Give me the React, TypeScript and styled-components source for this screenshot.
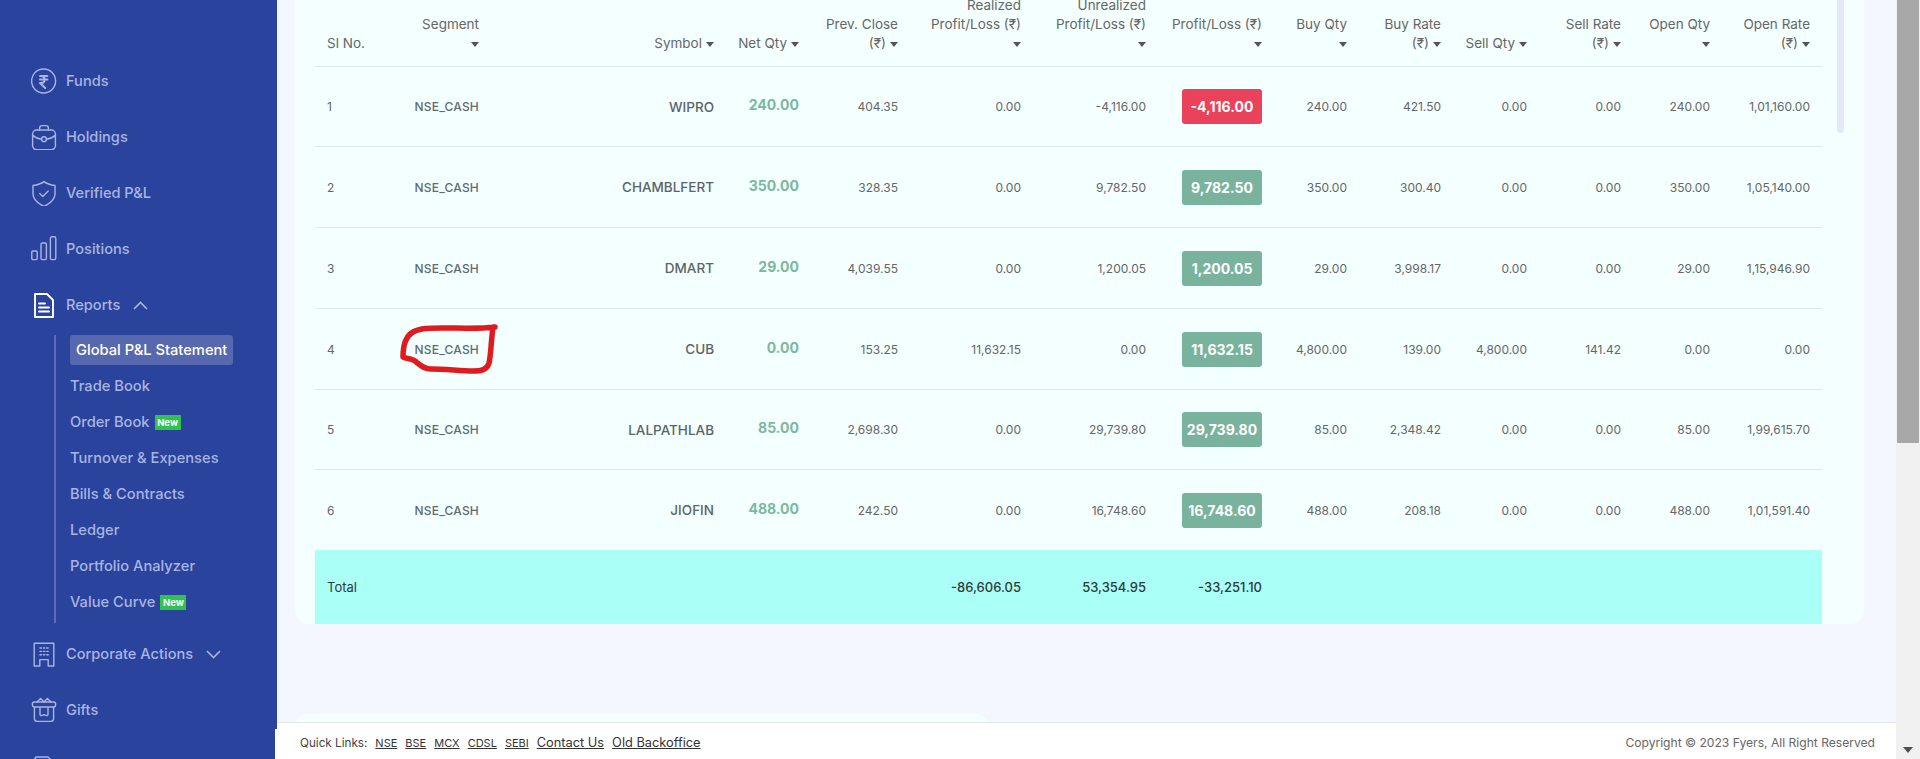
import React from "react";
import styled, { createGlobalStyle } from "styled-components";

const FONT = `Inter, "Open Sans", "Liberation Sans", sans-serif`;

const Global = createGlobalStyle`
  html, body { margin: 0; padding: 0; height: 100%; overflow: hidden; }
  body { font-family: ${FONT}; background: #f4f7ff; }
  * { box-sizing: border-box; }
`;

const Page = styled.div`
  display: flex;
  height: 759px;
  overflow: hidden;
`;

const Sidebar = styled.nav`
  width: 277px;
  flex: none;
  background: #2a439c;
  padding-top: 53px;
  overflow: hidden;
`;

const NavItem = styled.div`
  display: flex;
  align-items: center;
  height: 56px;
  padding-left: 31px;
  gap: 9px;
  color: #a9b5e3;
  font-size: 14.6px;
  font-weight: 500;
`;

const NavIcon = styled.svg`
  width: 26px;
  height: 26px;
  flex: none;
  fill: none;
  stroke: currentColor;
  stroke-width: 1.4;
  stroke-linecap: round;
  stroke-linejoin: round;
`;

const ActiveIcon = styled(NavIcon)`
  stroke: #fff;
  stroke-width: 1.9;
`;

const Chevron = styled.svg`
  width: 15px;
  height: 9px;
  margin-left: 4px;
  fill: none;
  stroke: currentColor;
  stroke-width: 1.6;
`;

const SubList = styled.div`
  margin: 2px 0 3px 54px;
  padding: 0 0 6px 14px;
  border-left: 2px solid #5d6db5;
  display: flex;
  flex-direction: column;
  align-items: flex-start;
  gap: 6px;
`;

const SubItem = styled.div<{ $active?: boolean }>`
  display: flex;
  align-items: center;
  gap: 5px;
  height: 30px;
  border-radius: 3px;
  padding: ${(p) => (p.$active ? "0 6px" : "0")};
  background: ${(p) => (p.$active ? "#5868ae" : "transparent")};
  color: ${(p) => (p.$active ? "#fff" : "#a9b5e3")};
  font-size: 14.7px;
  font-weight: 500;
`;

const NewBadge = styled.span`
  display: inline-flex;
  align-items: center;
  justify-content: center;
  width: 26px;
  height: 15px;
  background: #2fc24f;
  color: #fff;
  font-size: 9.5px;
  font-weight: 700;
`;

const Main = styled.div`
  flex: 1;
  min-width: 0;
  display: flex;
  flex-direction: column;
`;

const Content = styled.div`
  flex: 1;
  min-height: 0;
  overflow: hidden;
  padding: 0 32px 0 18px;
`;

const Card = styled.section`
  position: relative;
  background: #f4ffff;
  padding: 0 42px 0 20px;
  border-radius: 0 0 14px 14px;
  overflow: hidden;
`;

const InnerThumb = styled.div`
  position: absolute;
  top: 0;
  right: 20px;
  width: 7px;
  height: 133px;
  background: #e3e9fb;
  border-radius: 0 0 4px 4px;
`;

const Table = styled.table`
  margin-top: -25px;
  width: 1507px;
  table-layout: fixed;
  border-collapse: separate;
  border-spacing: 0;
`;

const Th = styled.th<{ $left?: boolean }>`
  height: 92px;
  padding: 0 12px 13px;
  vertical-align: bottom;
  text-align: ${(p) => (p.$left ? "left" : "right")};
  font-size: 13.5px;
  font-weight: 400;
  line-height: 19px;
  color: #666;
  white-space: pre-line;
  border-bottom: 1px solid #dfe7ea;
`;

const SortCaret = styled.span`
  display: inline-block;
  width: 0;
  height: 0;
  margin-left: 4px;
  vertical-align: middle;
  border-left: 4.5px solid transparent;
  border-right: 4.5px solid transparent;
  border-top: 5px solid #555;
`;

const Td = styled.td<{ $left?: boolean; $noLine?: boolean; $h: number }>`
  position: relative;
  height: ${(p) => p.$h}px;
  padding: 0 12px;
  text-align: ${(p) => (p.$left ? "left" : "right")};
  font-size: 12px;
  color: #666;
  border-bottom: ${(p) => (p.$noLine ? "none" : "1px solid #dfe7ea")};
`;

const SegmentText = styled.span`
  font-size: 12px;
  font-weight: 500;
  letter-spacing: 0.2px;
  color: #5f6b70;
`;

const SymbolText = styled.span`
  font-size: 13.5px;
  font-weight: 500;
  color: #5b6468;
`;

const QtyText = styled.span`
  display: block;
  margin-top: -4px;
  font-size: 14px;
  font-weight: 700;
  color: #7ab89f;
`;

const PnlBadge = styled.span<{ $loss?: boolean }>`
  display: inline-flex;
  align-items: center;
  justify-content: center;
  width: 80px;
  height: 35px;
  border-radius: 3px;
  font-size: 14px;
  font-weight: 700;
  color: #fff;
  background: ${(p) => (p.$loss ? "#e9425a" : "#7ab39d")};
`;

const TotalCell = styled.td<{ $left?: boolean }>`
  height: 74px;
  padding: 0 12px;
  background: #aafff6;
  text-align: ${(p) => (p.$left ? "left" : "right")};
  font-size: 13px;
  font-weight: ${(p) => (p.$left ? 400 : 500)};
  color: #2f3a3a;
`;

const Scribble = styled.svg`
  position: absolute;
  left: 0;
  top: 15px;
  width: 98px;
  height: 50px;
  fill: none;
  stroke: #e01b1f;
  stroke-width: 5.5;
  stroke-linejoin: round;
  stroke-linecap: round;
`;

const PeekCard = styled.div`
  width: 695px;
  height: 40px;
  margin-top: 90px;
  background: #f4ffff;
  border-radius: 14px 14px 0 0;
`;

const Footer = styled.footer`
  position: relative;
  flex: none;
  height: 37px;
  background: #fff;
  border-top: 1px solid #e2e6ea;
  display: flex;
  align-items: center;
  justify-content: space-between;
  padding: 2px 21px 0 23px;
  font-size: 11.7px;
  color: #444;
  &::before {
    content: "";
    position: absolute;
    left: -2px;
    top: 6px;
    bottom: 0;
    width: 2px;
    background: #fff;
  }
`;

const QuickLinks = styled.div`
  display: flex;
  align-items: baseline;
  gap: 8px;
`;

const FootLink = styled.a<{ $abbr?: boolean }>`
  color: #333;
  font-size: ${(p) => (p.$abbr ? "11px" : "12.8px")};
  text-decoration: underline;
`;

const Copy = styled.span`
  font-size: 12.1px;
  color: #666;
`;

const ScrollTrack = styled.div`
  width: 24px;
  flex: none;
  background: #f1f1f1;
  display: flex;
  flex-direction: column;
  justify-content: space-between;
`;

const ScrollThumb = styled.div`
  width: 22px;
  height: 443px;
  margin-left: 1px;
  background: #a8a8a8;
`;

const ScrollArrow = styled.div`
  align-self: center;
  margin-bottom: 6px;
  width: 0;
  height: 0;
  border-left: 5px solid transparent;
  border-right: 5px solid transparent;
  border-top: 6px solid #505050;
`;

const icons: Record<string, React.ReactNode> = {
  funds: (
    <>
      <circle cx="12.6" cy="13" r="12" />
      <path strokeWidth="2" d="M9 8h7.4M9 11.6h7.4M10 8c4.8 0 4.8 7 0 7H9l5.2 5" />
    </>
  ),
  holdings: (
    <>
      <path d="M8.6 6V4.2c0-1.5 1-2.6 2.4-2.6h4c1.4 0 2.4 1.1 2.4 2.6V6" />
      <rect x="1.6" y="6" width="22.8" height="19.6" rx="4" />
      <path d="M1.6 11.4c3 2.6 6 3.6 9 3.8M24.4 11.4c-3 2.6-6 3.6-9 3.8" />
      <circle cx="13" cy="15.2" r="2.4" />
    </>
  ),
  verified: (
    <>
      <path d="M13 1.6C16 4 20 5 24 5.5V14c0 6-6 10-11 12.5C8 24 2 20 2 14V5.5C6 5 10 4 13 1.6z" />
      <path d="m8.8 13.6 3 3 5.4-5.6" />
    </>
  ),
  positions: (
    <>
      <rect x=".8" y="15" width="5.4" height="8.6" rx="1" />
      <rect x="10" y="7" width="5.4" height="16.6" rx="1.4" />
      <rect x="19.4" y=".8" width="5.4" height="22.8" rx="1.6" />
    </>
  ),
  corporate: (
    <>
      <path d="M3.2 25V2.2h19.6V25h-5.6v-6.4H8.8V25z" />
      <path d="M9 7h1.4M12.4 7h1.4M15.8 7h1.4M9 10.4h1.4M12.4 10.4h1.4M15.8 10.4h1.4M9 13.8h1.4M12.4 13.8h1.4M15.8 13.8h1.4" />
    </>
  ),
  gifts: (
    <>
      <rect x="1.4" y="5" width="23.2" height="5" rx="2" />
      <path d="M3.4 10v11.4c0 1.8 1.2 3 3 3h13.2c1.8 0 3-1.2 3-3V10" />
      <path d="M6 5l3.6-3.6L13 5l3.4-3.6L20 5" />
      <path d="M9 11v6.6c0 .8.6 1.2 1.4 1L13 17.6l2.6 1c.8.2 1.4-.2 1.4-1V11" />
    </>
  ),
  last: <path d="M4 27V6a2 2 0 0 1 2-2h11l5 5v18z" />,
};

const Icon = ({ name }: { name: string }) => <NavIcon viewBox="0 0 26 26">{icons[name]}</NavIcon>;

const headers: { label: string; caret?: boolean; left?: boolean; w: number }[] = [
  { label: "Sl No.", left: true, w: 85 },
  { label: "Segment\n", caret: true, w: 91 },
  { label: "Symbol", caret: true, w: 235 },
  { label: "Net Qty", caret: true, w: 85 },
  { label: "Prev. Close\n(₹)", caret: true, w: 99 },
  { label: "Realized\nProfit/Loss (₹)\n", caret: true, w: 123 },
  { label: "Unrealized\nProfit/Loss (₹)\n", caret: true, w: 125 },
  { label: "Profit/Loss (₹)\n", caret: true, w: 116 },
  { label: "Buy Qty\n", caret: true, w: 85 },
  { label: "Buy Rate\n(₹)", caret: true, w: 94 },
  { label: "Sell Qty", caret: true, w: 86 },
  { label: "Sell Rate\n(₹)", caret: true, w: 94 },
  { label: "Open Qty\n", caret: true, w: 89 },
  { label: "Open Rate\n(₹)", caret: true, w: 100 },
];

const rowHeights = [80, 81, 81, 81, 80, 80];

const rows = [
  ["WIPRO", "240.00", "404.35", "0.00", "-4,116.00", "-4,116.00", "240.00", "421.50", "0.00", "0.00", "240.00", "1,01,160.00"],
  ["CHAMBLFERT", "350.00", "328.35", "0.00", "9,782.50", "9,782.50", "350.00", "300.40", "0.00", "0.00", "350.00", "1,05,140.00"],
  ["DMART", "29.00", "4,039.55", "0.00", "1,200.05", "1,200.05", "29.00", "3,998.17", "0.00", "0.00", "29.00", "1,15,946.90"],
  ["CUB", "0.00", "153.25", "11,632.15", "0.00", "11,632.15", "4,800.00", "139.00", "4,800.00", "141.42", "0.00", "0.00"],
  ["LALPATHLAB", "85.00", "2,698.30", "0.00", "29,739.80", "29,739.80", "85.00", "2,348.42", "0.00", "0.00", "85.00", "1,99,615.70"],
  ["JIOFIN", "488.00", "242.50", "0.00", "16,748.60", "16,748.60", "488.00", "208.18", "0.00", "0.00", "488.00", "1,01,591.40"],
];

export default function App() {
  return (
    <>
      <Global />
      <Page>
        <Sidebar>
          <NavItem><Icon name="funds" />Funds</NavItem>
          <NavItem><Icon name="holdings" />Holdings</NavItem>
          <NavItem><Icon name="verified" />Verified P&amp;L</NavItem>
          <NavItem><Icon name="positions" />Positions</NavItem>
          <NavItem>
            <ActiveIcon viewBox="0 0 26 26">
              <path d="M4 25V2h12l6 6v17z" />
              <path d="M8 11.5h6M8 15.5h10M8 19.5h10" />
            </ActiveIcon>
            Reports
            <Chevron viewBox="0 0 15 9"><path d="M1 8l6.5-6.5L14 8" /></Chevron>
          </NavItem>
          <SubList>
            <SubItem $active>Global P&amp;L Statement</SubItem>
            <SubItem>Trade Book</SubItem>
            <SubItem>Order Book<NewBadge>New</NewBadge></SubItem>
            <SubItem>Turnover &amp; Expenses</SubItem>
            <SubItem>Bills &amp; Contracts</SubItem>
            <SubItem>Ledger</SubItem>
            <SubItem>Portfolio Analyzer</SubItem>
            <SubItem>Value Curve<NewBadge>New</NewBadge></SubItem>
          </SubList>
          <NavItem>
            <Icon name="corporate" />Corporate Actions
            <Chevron viewBox="0 0 15 9"><path d="M1 1l6.5 6.5L14 1" /></Chevron>
          </NavItem>
          <NavItem><Icon name="gifts" />Gifts</NavItem>
          <NavItem><Icon name="last" /></NavItem>
        </Sidebar>
        <Main>
          <Content>
            <Card>
              <InnerThumb />
              <Table>
                <colgroup>
                  {headers.map((h) => <col key={h.label} style={{ width: h.w }} />)}
                </colgroup>
                <thead>
                  <tr>
                    {headers.map((h) => (
                      <Th key={h.label} $left={h.left}>{h.label}{h.caret && <SortCaret />}</Th>
                    ))}
                  </tr>
                </thead>
                <tbody>
                  {rows.map((r, i) => {
                    const last = i === rows.length - 1;
                    const h = rowHeights[i];
                    return (
                      <tr key={r[0]}>
                        <Td $h={h} $left $noLine={last}>{i + 1}</Td>
                        <Td $h={h} $noLine={last}>
                          <SegmentText>NSE_CASH</SegmentText>
                          {r[0] === "CUB" && (
                            <Scribble viewBox="0 0 98 50">
                              <path d="M95 3C80 5 60 4 42 4 30 4 20 4 13 8 6 12 3 20 3 33c4 2 8 1 12 4 5 4 9 8 16 8 14 0 30 2 42 2 8 0 14-1 16-8 2-8 2-22 4-36z" />
                            </Scribble>
                          )}
                        </Td>
                        <Td $h={h} $noLine={last}><SymbolText>{r[0]}</SymbolText></Td>
                        <Td $h={h} $noLine={last}><QtyText>{r[1]}</QtyText></Td>
                        <Td $h={h} $noLine={last}>{r[2]}</Td>
                        <Td $h={h} $noLine={last}>{r[3]}</Td>
                        <Td $h={h} $noLine={last}>{r[4]}</Td>
                        <Td $h={h} $noLine={last}><PnlBadge $loss={r[5].startsWith("-")}>{r[5]}</PnlBadge></Td>
                        {r.slice(6).map((v, k) => <Td key={k} $h={h} $noLine={last}>{v}</Td>)}
                      </tr>
                    );
                  })}
                  <tr>
                    <TotalCell $left>Total</TotalCell>
                    <TotalCell colSpan={4} />
                    <TotalCell>-86,606.05</TotalCell>
                    <TotalCell>53,354.95</TotalCell>
                    <TotalCell>-33,251.10</TotalCell>
                    <TotalCell colSpan={6} />
                  </tr>
                </tbody>
              </Table>
            </Card>
            <PeekCard />
          </Content>
          <Footer>
            <QuickLinks>
              <span>Quick Links:</span>
              <FootLink $abbr>NSE</FootLink>
              <FootLink $abbr>BSE</FootLink>
              <FootLink $abbr>MCX</FootLink>
              <FootLink $abbr>CDSL</FootLink>
              <FootLink $abbr>SEBI</FootLink>
              <FootLink>Contact Us</FootLink>
              <FootLink>Old Backoffice</FootLink>
            </QuickLinks>
            <Copy>Copyright © 2023 Fyers, All Right Reserved</Copy>
          </Footer>
        </Main>
        <ScrollTrack>
          <ScrollThumb />
          <ScrollArrow />
        </ScrollTrack>
      </Page>
    </>
  );
}
